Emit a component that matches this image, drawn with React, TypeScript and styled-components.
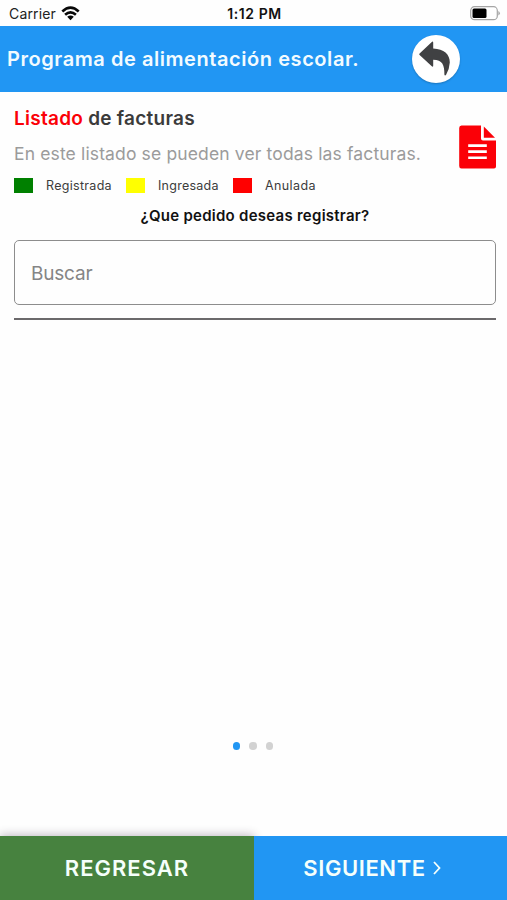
import React from 'react';
import styled, { createGlobalStyle } from 'styled-components';

const GlobalStyle = createGlobalStyle`
  * { box-sizing: border-box; }
  body { margin: 0; background: #fefefe; font-family: Inter, sans-serif; }
`;

const Screen = styled.main`
  width: 100%;
  height: 900px;
  display: flex;
  flex-direction: column;
  overflow: hidden;
`;

const StatusBar = styled.div`
  height: 25.5px;
  flex: none;
  display: grid;
  grid-template-columns: 1fr auto 1fr;
  align-items: center;
  padding: 2px 7px 0 9px;
  font-size: 14px;
  color: #222;
`;

const Carrier = styled.div`
  display: flex;
  align-items: center;
  gap: 5px;
`;

const Label = styled.span<{ $spacing?: number }>`
  white-space: nowrap;
  letter-spacing: ${(p) => p.$spacing ?? 0}px;
`;

const Clock = styled.span`
  font-weight: 600;
  font-size: 14px;
  color: #111;
`;

const Battery = styled.svg`
  justify-self: end;
  margin-right: -1px;
`;

const Header = styled.header`
  height: 66.5px;
  flex: none;
  display: flex;
  align-items: center;
  justify-content: space-between;
  padding: 0 47px 0 7px;
  background: #2196f3;
`;

const Title = styled.h1`
  margin: 0;
  font-size: 20px;
  font-weight: 600;
  color: #f2fbff;
`;

const BackButton = styled.button`
  width: 48px;
  height: 48px;
  padding: 0;
  border: 0;
  border-radius: 50%;
  background: #fff;
  box-shadow: 0 1px 2px rgba(0, 0, 0, 0.22);
`;

const Content = styled.section`
  flex: 1;
  display: flex;
  flex-direction: column;
  padding: 13px 11px 0 14px;
`;

const Intro = styled.div`
  display: flex;
  justify-content: space-between;
  height: 70px;
`;

const Heading = styled.h2`
  margin: 0;
  height: 27px;
  line-height: 28px;
  font-size: 19px;
  font-weight: 600;
  color: #3b3b3b;
`;

const Accent = styled.span`
  color: #fb0007;
`;

const Description = styled.p`
  margin: 8px 0 0;
  line-height: 27px;
  font-size: 17.5px;
  color: #9b9b9b;
`;

const DocumentIcon = styled.svg`
  margin-top: 20px;
  flex: none;
`;

const Legend = styled.div`
  display: flex;
  height: 20px;
  align-items: center;
  font-size: 12.5px;
  color: #3c3c3c;
`;

const LegendItem = styled.div<{ $width: number }>`
  width: ${(p) => p.$width}px;
  display: flex;
  align-items: center;
  gap: 13px;
`;

const Swatch = styled.span<{ $color: string }>`
  width: 19px;
  height: 15px;
  background: ${(p) => p.$color};
`;

const Question = styled.h3`
  margin: 10.5px 0 0;
  height: 20px;
  line-height: 20px;
  text-align: center;
  font-size: 15px;
  font-weight: 600;
  color: #111;
`;

const Search = styled.input`
  width: 100%;
  height: 65px;
  flex: none;
  margin-top: 14.5px;
  padding: 2px 16px 0;
  border: 1.5px solid #8d8d8d;
  border-radius: 5px;
  outline: 0;
  background: transparent;
  font: 400 19px Inter, sans-serif;
  letter-spacing: -0.2px;
  &::placeholder { color: #858585; opacity: 1; }
`;

const Divider = styled.hr`
  width: 100%;
  height: 2px;
  margin: 13px 0 0;
  border: 0;
  background: #6b696b;
`;

const Pager = styled.div`
  display: flex;
  justify-content: center;
  gap: 9px;
  padding-right: 1px;
  margin-bottom: 86.5px;
`;

const Dot = styled.span<{ $active?: boolean }>`
  width: 7.5px;
  height: 7.5px;
  border-radius: 50%;
  background: ${(p) => (p.$active ? '#2196f3' : '#d2d2d2')};
`;

const Actions = styled.footer`
  height: 64px;
  flex: none;
  display: grid;
  grid-template-columns: 254px 1fr;
`;

const ActionButton = styled.button<{ $primary?: boolean }>`
  display: flex;
  align-items: center;
  justify-content: center;
  gap: 7px;
  padding: 0 ${(p) => (p.$primary ? 17 : 0)}px 0 0;
  border: 0;
  background: ${(p) => (p.$primary ? '#2196f3' : '#47823f')};
  box-shadow: ${(p) => (p.$primary ? 'none' : '0 -1px 9px rgba(40, 20, 50, 0.3)')};
  color: #f5fffb;
  font: 600 22px Inter, sans-serif;
`;

export default function App() {
  return (
    <Screen>
      <GlobalStyle />
      <StatusBar>
        <Carrier>
          <Label $spacing={0.15}>Carrier</Label>
          <svg width="19" height="15" viewBox="0 0 19 15" fill="none" stroke="#080808" strokeWidth="2.6">
            <path d="M1.3 5.5Q9.5 -2.2 17.7 5.5M4.1 8.8Q9.5 3.8 14.9 8.8" />
            <path d="M6.2 10.8Q9.5 8 12.8 10.8L9.5 14.2Z" fill="#080808" stroke="none" />
          </svg>
        </Carrier>
        <Clock><Label $spacing={0.6}>1:12 PM</Label></Clock>
        <Battery width="31" height="15" viewBox="0 0 31 15">
          <rect x="0.7" y="0.7" width="26.6" height="13" rx="3.8" fill="#fff" stroke="#a5a5a5" strokeWidth="1.2" />
          <rect x="2.5" y="2.5" width="14" height="9.5" rx="1.5" fill="#000" />
          <path d="M28.3 5Q31.5 7.2 28.3 9.5Z" fill="#aaa" />
        </Battery>
      </StatusBar>
      <Header>
        <Title><Label $spacing={0.56}>Programa de alimentación escolar.</Label></Title>
        <BackButton aria-label="Regresar">
          <svg width="48" height="48" viewBox="0 0 48 48">
            <path fill="#404143" d="M7.6 18.4 19.8 6.9Q21.2 6 21.2 7.8V13.6C32 14 37.8 19.5 37.8 27.5Q37.5 34 34 40Q32.7 41.2 32.4 39.5C32.5 30 30.5 25 21.2 24.8V30.8Q21.1 32.5 19.8 31.3L7.6 20Q6.7 19.2 7.6 18.4Z" />
          </svg>
        </BackButton>
      </Header>
      <Content>
        <Intro>
          <div>
            <Heading><Label $spacing={0.26}><Accent>Listado</Accent> de facturas</Label></Heading>
            <Description><Label $spacing={0.14}>En este listado se pueden ver todas las facturas.</Label></Description>
          </div>
          <DocumentIcon width="37" height="44" viewBox="0 0 37 44">
            <path fill="#fb0007" d="M2.5 0.5H22V13.5Q22 15.5 24 15.5H37V41.5Q37 43.5 35 43.5H2.5Q0.2 43.5 0.2 41V3Q0.2 0.5 2.5 0.5Z" />
            <path fill="#fb0007" d="M24.8 1.5V12.8H36Z" />
            <path stroke="#fff" strokeWidth="2.6" d="M9.2 20.6H27.8M9.2 26.6H27.8M9.2 32.8H27.8" />
          </DocumentIcon>
        </Intro>
        <Legend>
          <LegendItem $width={112}><Swatch $color="#008000" /><Label $spacing={0.3}>Registrada</Label></LegendItem>
          <LegendItem $width={107}><Swatch $color="#ffff00" /><Label $spacing={0.25}>Ingresada</Label></LegendItem>
          <LegendItem $width={100}><Swatch $color="#ff0000" /><Label $spacing={0.4}>Anulada</Label></LegendItem>
        </Legend>
        <Question><Label $spacing={0.26}>¿Que pedido deseas registrar?</Label></Question>
        <Search placeholder="Buscar" />
        <Divider />
      </Content>
      <Pager><Dot $active /><Dot /><Dot /></Pager>
      <Actions>
        <ActionButton><Label $spacing={1}>REGRESAR</Label></ActionButton>
        <ActionButton $primary>
          <Label $spacing={0.6}>SIGUIENTE</Label>
          <svg width="8" height="14" viewBox="0 0 8 14" fill="none" stroke="#f5fffb" strokeWidth="1.8"><path d="m1 1 5.5 6L1 13" /></svg>
        </ActionButton>
      </Actions>
    </Screen>
  );
}
